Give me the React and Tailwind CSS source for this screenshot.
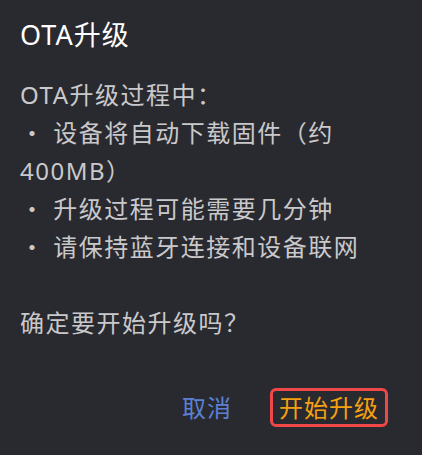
export default function App() {
  const font = { fontFamily: '"Noto Sans", "Noto Sans CJK SC", sans-serif' };
  return (
    <div className="w-[422px] h-[455px] bg-[#292a2f] flex flex-col" style={font}>
      <div className="px-5 pt-[16px] text-[27px] leading-[38px] text-white tracking-[1px]">OTA升级</div>
      <div className="px-5 mt-[22px] text-[24px] leading-[38px] text-[#c9c9cc] tracking-[1.5px] whitespace-pre-line">
        {"OTA升级过程中：\n・ 设备将自动下载固件（约400MB）\n・ 升级过程可能需要几分钟\n・ 请保持蓝牙连接和设备联网\n\n确定要开始升级吗？"}
      </div>
      <div className="flex justify-end items-center gap-[38px] pr-[34px] mt-[46px]">
        <button className="text-[24px] leading-[32px] text-[#5b80d4] tracking-[1px]">取消</button>
        <button className="h-[39px] w-[118px] border-[3px] border-[#f04848] rounded-[6px] text-[24px] leading-[32px] text-[#f5a011] tracking-[1px] flex items-center justify-center">开始升级</button>
      </div>
    </div>
  );
}
